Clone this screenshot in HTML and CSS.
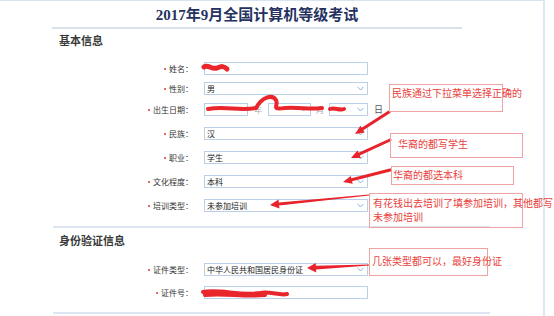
FILE: index.html
```html
<!DOCTYPE html>
<html lang="zh-CN">
<head>
    <meta charset="UTF-8">
    <meta name="viewport" content="width=device-width, initial-scale=1.0">
    <title>2017年9月全国计算机等级考试</title>
    <link rel="stylesheet" href="styles.css">
</head>
<body>
    <div class="page">
        <div class="header">
            <h1>2017年9月全国计算机等级考试</h1>
        </div>

        <!-- 基本信息 -->
        <div class="section basic">
            <h2>基本信息</h2>
            <div class="row r1">
                <label><i class="req"></i>姓名：</label>
                <div class="field"></div>
            </div>
            <div class="row r2">
                <label><i class="req"></i>性别：</label>
                <div class="field select"><span>男</span><svg class="chev" width="7" height="5" viewBox="0 0 7 5"><polyline points="0.5,0.8 3.5,4 6.5,0.8"/></svg></div>
            </div>
            <div class="row r3">
                <label><i class="req"></i>出生日期：</label>
                <div class="date">
                    <div class="field select sel-y"><span></span><svg class="chev" width="7" height="5" viewBox="0 0 7 5"><polyline points="0.5,0.8 3.5,4 6.5,0.8"/></svg></div>
                    <span class="unit light">年</span>
                    <div class="field select sel-m"><span></span><svg class="chev" width="7" height="5" viewBox="0 0 7 5"><polyline points="0.5,0.8 3.5,4 6.5,0.8"/></svg></div>
                    <span class="unit light short">月</span>
                    <div class="field select sel-d"><span></span><svg class="chev" width="7" height="5" viewBox="0 0 7 5"><polyline points="0.5,0.8 3.5,4 6.5,0.8"/></svg></div>
                    <span class="unit day">日</span>
                </div>
            </div>
            <div class="row">
                <label><i class="req"></i>民族：</label>
                <div class="field select"><span>汉</span><svg class="chev" width="7" height="5" viewBox="0 0 7 5"><polyline points="0.5,0.8 3.5,4 6.5,0.8"/></svg></div>
            </div>
            <div class="row">
                <label><i class="req"></i>职业：</label>
                <div class="field select"><span>学生</span><svg class="chev" width="7" height="5" viewBox="0 0 7 5"><polyline points="0.5,0.8 3.5,4 6.5,0.8"/></svg></div>
            </div>
            <div class="row">
                <label><i class="req"></i>文化程度：</label>
                <div class="field select"><span>本科</span><svg class="chev" width="7" height="5" viewBox="0 0 7 5"><polyline points="0.5,0.8 3.5,4 6.5,0.8"/></svg></div>
            </div>
            <div class="row">
                <label><i class="req"></i>培训类型：</label>
                <div class="field select"><span>未参加培训</span><svg class="chev" width="7" height="5" viewBox="0 0 7 5"><polyline points="0.5,0.8 3.5,4 6.5,0.8"/></svg></div>
            </div>
        </div>

        <!-- 身份验证信息 -->
        <div class="section ident">
            <h2>身份验证信息</h2>
            <div class="row r1">
                <label><i class="req"></i>证件类型：</label>
                <div class="field select"><span>中华人民共和国居民身份证</span><svg class="chev" width="7" height="5" viewBox="0 0 7 5"><polyline points="0.5,0.8 3.5,4 6.5,0.8"/></svg></div>
            </div>
            <div class="row r2b">
                <label><i class="req"></i>证件号：</label>
                <div class="field"></div>
            </div>
        </div>

        <!-- Annotations drawn over the form -->
        <div class="overlay">
            <svg class="marks" width="554" height="316" viewBox="0 0 554 316">
                <g class="scribble">
                    <path class="thick" d="M204 67 C208 64 212 70 217 68 S224 66 227 69"/>
                    <path d="M208 109 C225 106 240 111 256 108 C262 97 272 94 276 100 C279 106 270 110 285 108 C300 107 310 110 322 108"/>
                    <path d="M330 109 C335 107 339 111 344 109"/>
                    <path d="M203 292 C220 289 240 296 260 293 C270 291 280 296 287 294"/>
                    <path d="M205 295 C225 293 245 297 265 295"/>
                </g>
                <g class="arrow">
                    <line x1="389" y1="112" x2="362.5" y2="129.1"/>
                    <polygon points="355,134 364.7,132.5 360.4,125.8"/>
                    <line x1="390" y1="140" x2="359.2" y2="154.2"/>
                    <polygon points="351,158 360.9,157.9 357.5,150.6"/>
                    <line x1="390" y1="170" x2="351.7" y2="179.8"/>
                    <polygon points="343,182 352.7,183.7 350.7,175.9"/>
                </g>
                <g class="arrow-fill">
                    <polygon points="369,195.5 369,194.5 278.8,202.6 279.2,205.6"/>
                    <polygon points="270,205 279.4,208.6 278.6,199.6"/>
                    <polygon points="369,265.6 369,264.4 315.9,265.8 316.1,269.4"/>
                    <polygon points="307,268 316.2,272.4 315.8,263"/>
                </g>
            </svg>

            <div class="note n1">民族通过下拉菜单选择正确的</div>
            <div class="note n2">华裔的都写学生</div>
            <div class="note n3">华裔的都选本科</div>
            <div class="note n4">有花钱出去培训了填参加培训，其他都写<br>未参加培训</div>
            <div class="note n5">几张类型都可以，最好身份证</div>
        </div>
    </div>
</body>
</html>
```

FILE: styles.css
```css
body {
    margin: 0;
    background-color: #fff;
    font-family: "Noto Sans CJK SC", "Liberation Sans", sans-serif;
    color: #333;
}

.page {
    position: relative;
    width: 543px;
    height: 315px;
    border-top: 1px solid #d6e4f2;
    border-right: 2px solid #dde8f4;
}

.header {
    margin-left: 52px;
    width: 410px;
    height: 26px;
    border-bottom: 2px solid #d9e2ec;
}

h1 {
    margin: 0;
    padding-top: 4px;
    font: bold 15px/20px "Liberation Serif", "Noto Sans CJK SC", serif;
    text-align: center;
    color: #25325f;
}

.section {
    margin-left: 53px;
    width: 437px;
    border-bottom: 2px solid #dde6f0;
}

.basic {
    height: 197px;
}

.ident {
    height: 84px;
}

h2 {
    margin: 0;
    padding: 4px 0 0 6px;
    font-size: 11px;
    line-height: 14px;
    font-weight: 600;
    color: #3a3a3a;
}

.ident h2 {
    padding-top: 5px;
}

.row {
    display: flex;
    align-items: center;
    height: 13px;
    margin-top: 11px;
}

.basic .r1 {
    margin-top: 15px;
}

.r2 {
    margin-top: 7px;
}

.r3 {
    margin-top: 8px;
}

.ident .r1 {
    margin-top: 16px;
}

.r2b {
    margin-top: 10px;
}

label {
    flex: none;
    width: 140px;
    display: flex;
    justify-content: flex-end;
    align-items: center;
    font-size: 8px;
    color: #333;
    white-space: nowrap;
}

.req {
    display: inline-block;
    width: 2px;
    height: 2px;
    border-radius: 50%;
    background-color: #e0353a;
    margin-right: 3px;
}

.field {
    flex: none;
    width: 164px;
    height: 13px;
    margin-left: 11px;
    box-sizing: border-box;
    border: 1px solid #b9d0e8;
    background-color: #fff;
    display: flex;
    align-items: center;
    justify-content: space-between;
    padding: 0 3px 0 2px;
    font-size: 8px;
    color: #222;
    white-space: nowrap;
}

.chev {
    flex: none;
}

.chev polyline {
    fill: none;
    stroke: #8fb3d9;
    stroke-width: 1;
}

.date {
    display: flex;
    align-items: center;
    margin-left: 11px;
}

.date .field {
    margin-left: 0;
}

.sel-y {
    width: 44px;
}

.sel-m {
    width: 43px;
}

.sel-d {
    width: 39px;
}

.unit {
    font-size: 8px;
    text-align: center;
    width: 20px;
}

.unit.short {
    width: 18px;
}

.unit.light {
    color: #aaa;
}

.unit.day {
    width: auto;
    margin-left: 6px;
    font-size: 9px;
    color: #555;
}

/* annotation layer */
.overlay {
    position: absolute;
    left: 0;
    top: -1px;
    width: 554px;
    height: 316px;
    pointer-events: none;
}

.marks {
    position: absolute;
    left: 0;
    top: 0;
}

.scribble path {
    fill: none;
    stroke: #e8262b;
    stroke-width: 4;
    stroke-linecap: round;
    stroke-linejoin: round;
}

.scribble path.thick {
    stroke-width: 5;
}

.arrow line {
    stroke: #e8232b;
    stroke-width: 3;
    stroke-linecap: round;
}

.arrow polygon,
.arrow-fill polygon {
    fill: #e8232b;
}

.note {
    position: absolute;
    box-sizing: border-box;
    border: 1px solid #eea3a3;
    color: #e8413c;
    font-size: 10px;
    line-height: 14px;
    white-space: nowrap;
}

.n1 {
    left: 389px;
    top: 84px;
    width: 114px;
    height: 28px;
    padding: 1px 0 0 2px;
}

.n2 {
    left: 390px;
    top: 133px;
    width: 133px;
    height: 25px;
    padding: 3px 0 0 7px;
}

.n3 {
    left: 391px;
    top: 166px;
    width: 123px;
    height: 19px;
    padding: 1px 0 0 1px;
}

.n4 {
    left: 369px;
    top: 193px;
    width: 154px;
    height: 35px;
    padding: 2px 0 0 3px;
}

.n5 {
    left: 369px;
    top: 248px;
    width: 119px;
    height: 28px;
    padding: 5px 0 0 2px;
}
```
